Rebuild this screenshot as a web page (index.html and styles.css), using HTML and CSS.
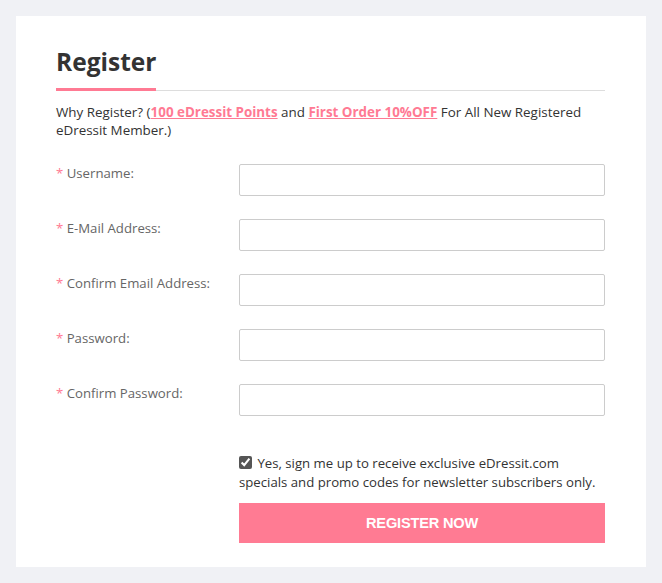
FILE: index.html
```html
<!DOCTYPE html>
<html>
<head>
<meta charset="utf-8">
<link rel="stylesheet" href="styles.css">
</head>
<body>
<div class="card">
  <div class="head"><h1 class="title">Register</h1></div>
  <p class="intro">Why Register? (<a class="hl" href="#">100 eDressit Points</a> and <a class="hl" href="#">First Order 10%OFF</a> For All New Registered eDressit Member.)</p>
  <div class="form">
    <div class="row"><label class="lbl"><span class="req">*</span> Username:</label><input class="inp" type="text"></div>
    <div class="row"><label class="lbl"><span class="req">*</span> E-Mail Address:</label><input class="inp" type="text"></div>
    <div class="row"><label class="lbl"><span class="req">*</span> Confirm Email Address:</label><input class="inp" type="text"></div>
    <div class="row"><label class="lbl"><span class="req">*</span> Password:</label><input class="inp" type="password"></div>
    <div class="row"><label class="lbl"><span class="req">*</span> Confirm Password:</label><input class="inp" type="password"></div>
    <div class="row extra">
      <div></div>
      <div class="right">
        <label class="news"><input class="chk" type="checkbox" checked> Yes, sign me up to receive exclusive eDressit.com specials and promo codes for newsletter subscribers only.</label>
        <button class="btn" type="button">REGISTER NOW</button>
      </div>
    </div>
  </div>
</div>
</body>
</html>
```
FILE: styles.css
```css
html, body { margin: 0; padding: 0; }
body {
  background: #f0f1f5;
  padding: 16px;
  font-family: "Open Sans", "Noto Sans", sans-serif;
  color: #333;
}
.card {
  background: #fff;
  width: 630px;
  height: 551px;
  box-sizing: border-box;
  padding: 27px 41px 0 40px;
}
.head {
  border-bottom: 1px solid #ddd;
}
.title {
  display: inline-block;
  margin: 0 0 -1px 0;
  font-size: 24.5px;
  font-weight: 700;
  line-height: 38px;
  padding-bottom: 7px;
  border-bottom: 3px solid #ff7a93;
  color: #333;
  width: 100px;
}
.intro {
  margin: 12px 0 0 0;
  font-size: 13.4px;
  line-height: 18px;
  color: #333;
}
.hl {
  color: #ff7a93;
  font-weight: 700;
  text-decoration: underline;
}
.form {
  margin-top: 25px;
  display: flex;
  flex-direction: column;
  gap: 23px;
}
.row {
  display: grid;
  grid-template-columns: 183px 366px;
  align-items: start;
}
.lbl {
  font-size: 13.2px;
  color: #666;
  line-height: 18px;
  padding-top: 0;
}
.req { color: #ff7a93; }
.inp {
  height: 32px;
  box-sizing: border-box;
  border: 1px solid #ccc;
  border-radius: 2px;
  margin: 0;
  width: 366px;
}
.extra { margin-top: 15px; }
.news {
  display: block;
  font-size: 13.2px;
  line-height: 19px;
  color: #333;
}
.chk {
  margin: 0 2px 0 0;
  width: 13px;
  height: 13px;
  vertical-align: -1px;
  accent-color: #555;
}
.btn {
  display: block;
  margin-top: 11px;
  width: 366px;
  height: 40px;
  border: 0;
  background: #ff7b93;
  color: #fff;
  font-family: "Liberation Sans", Arial, sans-serif;
  font-weight: 700;
  font-size: 14.6px;
  letter-spacing: -0.2px;
}
```
